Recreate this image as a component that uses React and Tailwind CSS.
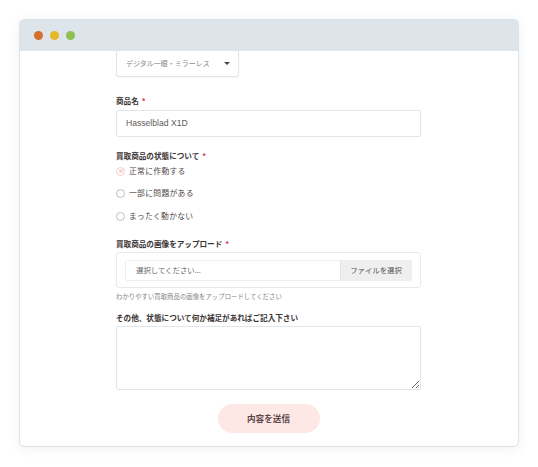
import React from 'react';

const font = { fontFamily: '"Noto Sans CJK JP", "Noto Sans", sans-serif' };

function Label({ children, required, className = '' }) {
  return (
    <div className={`text-[7.6px] leading-[10px] font-bold text-[#3b3434] ${className}`}>
      {children}
      {required && <span className="text-[#e8264f] ml-[3px]">*</span>}
    </div>
  );
}

function Radio({ label, checked, className = '' }) {
  return (
    <div className={`flex items-center h-[12px] ${className}`}>
      {checked ? (
        <span className="w-[9px] h-[9px] rounded-full border border-[#f6cccc] flex items-center justify-center">
          <span className="w-[4px] h-[4px] rounded-full bg-[#f8d3d3]" />
        </span>
      ) : (
        <span className="w-[9px] h-[9px] rounded-full border border-[#bdbdbd] bg-white" />
      )}
      <span className="ml-[4px] text-[7.8px] tracking-[0.3px] text-[#4f4848]">{label}</span>
    </div>
  );
}

export default function App() {
  return (
    <div className="w-[538px] h-[467px] bg-white pt-[19px] pl-[19px]" style={font}>
      <div className="w-[500px] h-[428px] rounded-[5px] border border-[#dbe3e9] bg-white overflow-hidden shadow-[0_2px_14px_rgba(0,0,0,0.06)]">
        {/* title bar */}
        <div className="h-[31px] bg-[#dde5eb] flex items-center gap-[7px] pl-[14px]">
          <span className="w-[9px] h-[9px] rounded-full bg-[#d2702c]" />
          <span className="w-[9px] h-[9px] rounded-full bg-[#e6b823]" />
          <span className="w-[9px] h-[9px] rounded-full bg-[#8cc152]" />
        </div>

        <div className="pl-[96px] w-[401px]">
          {/* category select (scrolled) */}
          <div className="w-[123px] h-[26px] border border-t-0 border-[#e2e6ea] rounded-b-[3px] flex items-center justify-between pl-[9px] pr-[8px] shadow-[0_1px_2px_rgba(0,0,0,0.04)]">
            <span className="text-[7px] text-[#8a8585]">デジタル一眼・ミラーレス</span>
            <span className="w-0 h-0 border-l-[3px] border-r-[3px] border-t-[3px] border-l-transparent border-r-transparent border-t-[#444]" />
          </div>

          <Label required className="mt-[19px]">商品名</Label>
          <div
            className="mt-[4px] h-[27px] border border-[#e2e6ea] rounded-[2px] flex items-center pl-[9px] text-[8.6px] text-[#5f5a5a]"
            style={{ fontFamily: '"Liberation Sans", Arial, sans-serif' }}
          >
            Hasselblad X1D
          </div>

          <Label required className="mt-[14px]">買取商品の状態について</Label>
          <Radio checked label="正常に作動する" className="mt-[4px]" />
          <Radio label="一部に問題がある" className="mt-[10px]" />
          <Radio label="まったく動かない" className="mt-[11px]" />

          <Label required className="mt-[17px]">買取商品の画像をアップロード</Label>
          <div className="mt-[3px] h-[36px] border border-[#e6eaee] rounded-[3px] flex items-center px-[8px]">
            <div className="flex-1 h-[21px] flex border border-[#eceff1] rounded-[2px]">
              <div className="flex-1 flex items-center pl-[10px] text-[7.4px] text-[#6a6464]">選択してください...</div>
              <div className="w-[71px] bg-[#efefef] border-l border-[#e4e4e4] flex items-center justify-center text-[7.4px] text-[#555]">
                ファイルを選択
              </div>
            </div>
          </div>
          <div className="mt-[5px] text-[6.4px] leading-[8px] text-[#8a8585]">
            わかりやすい買取商品の画像をアップロードしてください
          </div>

          <Label className="mt-[12px]">その他、状態について何か補足があればご記入下さい</Label>
          <textarea
            readOnly
            className="mt-[3px] block w-full h-[64px] border border-[#e2e6ea] rounded-[2px] outline-none"
          />

          <div className="mt-[14px] flex justify-center">
            <button className="w-[102px] h-[29px] rounded-full bg-[#fde8e6] text-[8.6px] font-bold text-[#5a4646]">
              内容を送信
            </button>
          </div>
        </div>
      </div>
    </div>
  );
}
